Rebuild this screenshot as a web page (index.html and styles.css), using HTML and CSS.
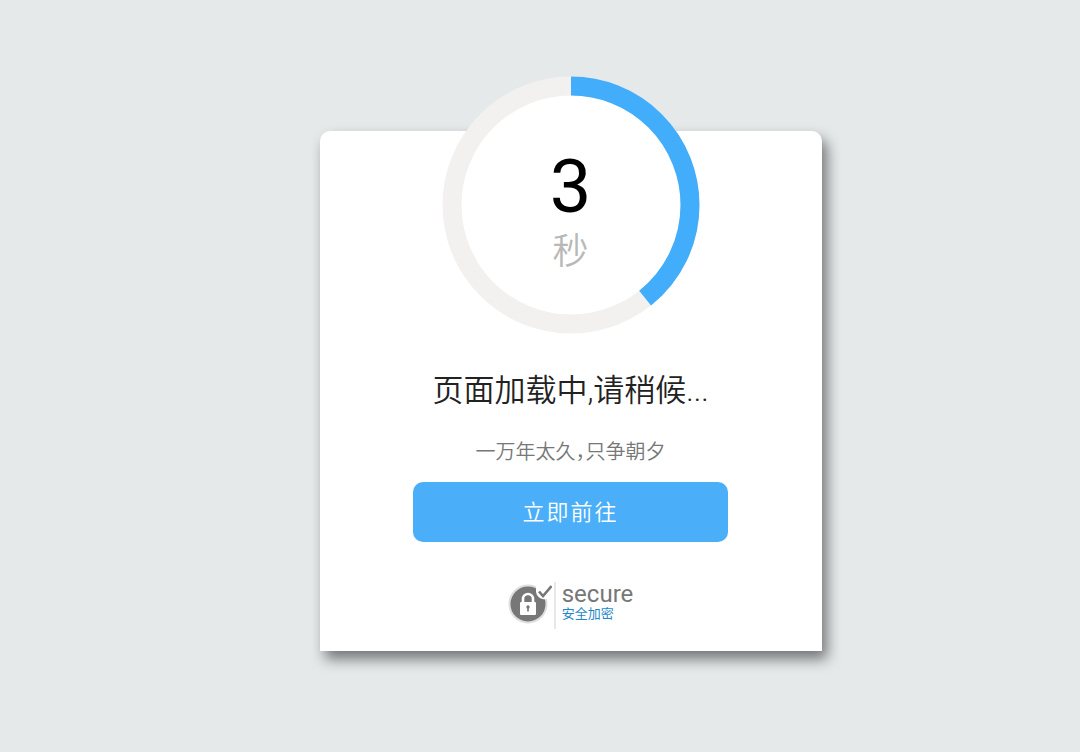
FILE: index.html
```html
<!DOCTYPE html>
<html lang="zh-CN">

<head>
	<meta charset="UTF-8">
	<meta name="viewport" content="width=device-width,initial-scale=1">
	<title>页面加载中</title>
	<link rel="stylesheet" href="styles.css">
</head>

<body>
	<main class="page">
		<section class="card">
			<div class="timer">
				<svg class="timer-ring" viewBox="0 0 258 258" aria-hidden="true">
					<circle class="ring-track" cx="129" cy="129" r="119" />
					<circle class="ring-value" cx="129" cy="129" r="119" pathLength="100" transform="rotate(-90 129 129)" />
				</svg>
				<div class="timer-text">
					<span class="timer-number">3</span>
					<span class="timer-unit">秒</span>
				</div>
			</div>
			<h1 class="title">页面加载中,请稍候...</h1>
			<p class="subtitle">一万年太久&#65292;只争朝夕</p>
			<button class="go-btn" type="button">立即前往</button>
			<div class="secure">
				<svg class="secure-icon" viewBox="0 0 44 44" aria-hidden="true">
					<circle cx="20" cy="22" r="18.5" fill="#777" stroke="#dedede" stroke-width="2" />
					<path d="M28 0h16v14l-6 3a8 8 0 0 1-10-7z" fill="#fff" />
					<path d="M15 21v-4a5 5 0 0 1 10 0V21" fill="none" stroke="#fff" stroke-width="2.600" />
					<rect x="12" y="20" width="16" height="13" rx="1" fill="#fff" />
					<circle cx="20" cy="25" r="1.700" fill="#777" />
					<path d="M20 25v4.500" stroke="#777" stroke-width="1.600" />
					<path d="M31 9.500l4 4.500L43.500 4" fill="none" stroke="#777" stroke-width="2.600" />
				</svg>
				<div class="secure-text">
					<span class="secure-name">secure</span>
					<span class="secure-note">安全加密</span>
				</div>
			</div>
		</section>
	</main>
</body>

</html>
```

FILE: styles.css
```css
:root {
	--primary: #42adfa;
	--track: #f2f1f0;
}

* {
	box-sizing: border-box;
}

body {
	margin: 0;
	font-family: Roboto, "Noto Sans CJK SC", sans-serif;
	background: #e5e9ea;
	color: #222;
}

.page {
	display: flex;
	justify-content: center;
	align-items: flex-start;
	min-height: 100vh;
	padding: 131px 0 64px 61px;
}

.card {
	display: flex;
	flex-direction: column;
	align-items: center;
	width: 90%;
	max-width: 502px;
	padding: 0 24px 22px;
	background: #fff;
	border-radius: 10px 10px 0 0;
	box-shadow: 5px 8px 14px rgba(0, 0, 0, 0.5);
}

.timer {
	display: grid;
	place-items: center;
	width: 258px;
	margin-top: -55px;
}

.timer-ring,
.timer-text {
	grid-area: 1 / 1;
}

.timer-ring {
	display: block;
	width: 100%;
}

.ring-track {
	fill: #fff;
	stroke: var(--track);
	stroke-width: 19;
}

.ring-value {
	fill: none;
	stroke: var(--primary);
	stroke-width: 19;
	stroke-dasharray: 39.3 100;
}

.timer-text {
	display: flex;
	flex-direction: column;
	align-items: center;
	padding-top: 14px;
}

.timer-number {
	font-size: 74px;
	line-height: 80px;
	color: #000;
}

.timer-unit {
	font-size: 36px;
	line-height: 50px;
	font-weight: 350;
	color: #b8b8b8;
}

.title {
	margin: 32px 0 0;
	font-size: 31px;
	line-height: 50px;
	font-weight: 350;
}

.subtitle {
	margin: 20px 0 0;
	font-size: 20px;
	line-height: 32px;
	font-weight: 350;
	font-feature-settings: "halt";
	color: #777;
}

.go-btn {
	width: 315px;
	max-width: 100%;
	height: 60px;
	margin-top: 14px;
	padding: 0 0 4px;
	border: 0;
	border-radius: 10px;
	background: #4aaff8;
	color: #fff;
	font-family: inherit;
	font-size: 22px;
	font-weight: 350;
	letter-spacing: 2px;
	cursor: pointer;
}

.secure {
	display: flex;
	align-items: flex-start;
	margin-top: 40px;
}

.secure-icon {
	width: 44px;
	height: 44px;
}

.secure-text {
	display: flex;
	flex-direction: column;
	height: 47px;
	margin-left: 2px;
	padding-left: 6px;
	border-left: 2px solid #e8e8e8;
}

.secure-name {
	font-size: 24px;
	line-height: 24px;
	color: #777;
}

.secure-note {
	font-size: 13px;
	line-height: 16px;
	color: #1e88c9;
}
```
